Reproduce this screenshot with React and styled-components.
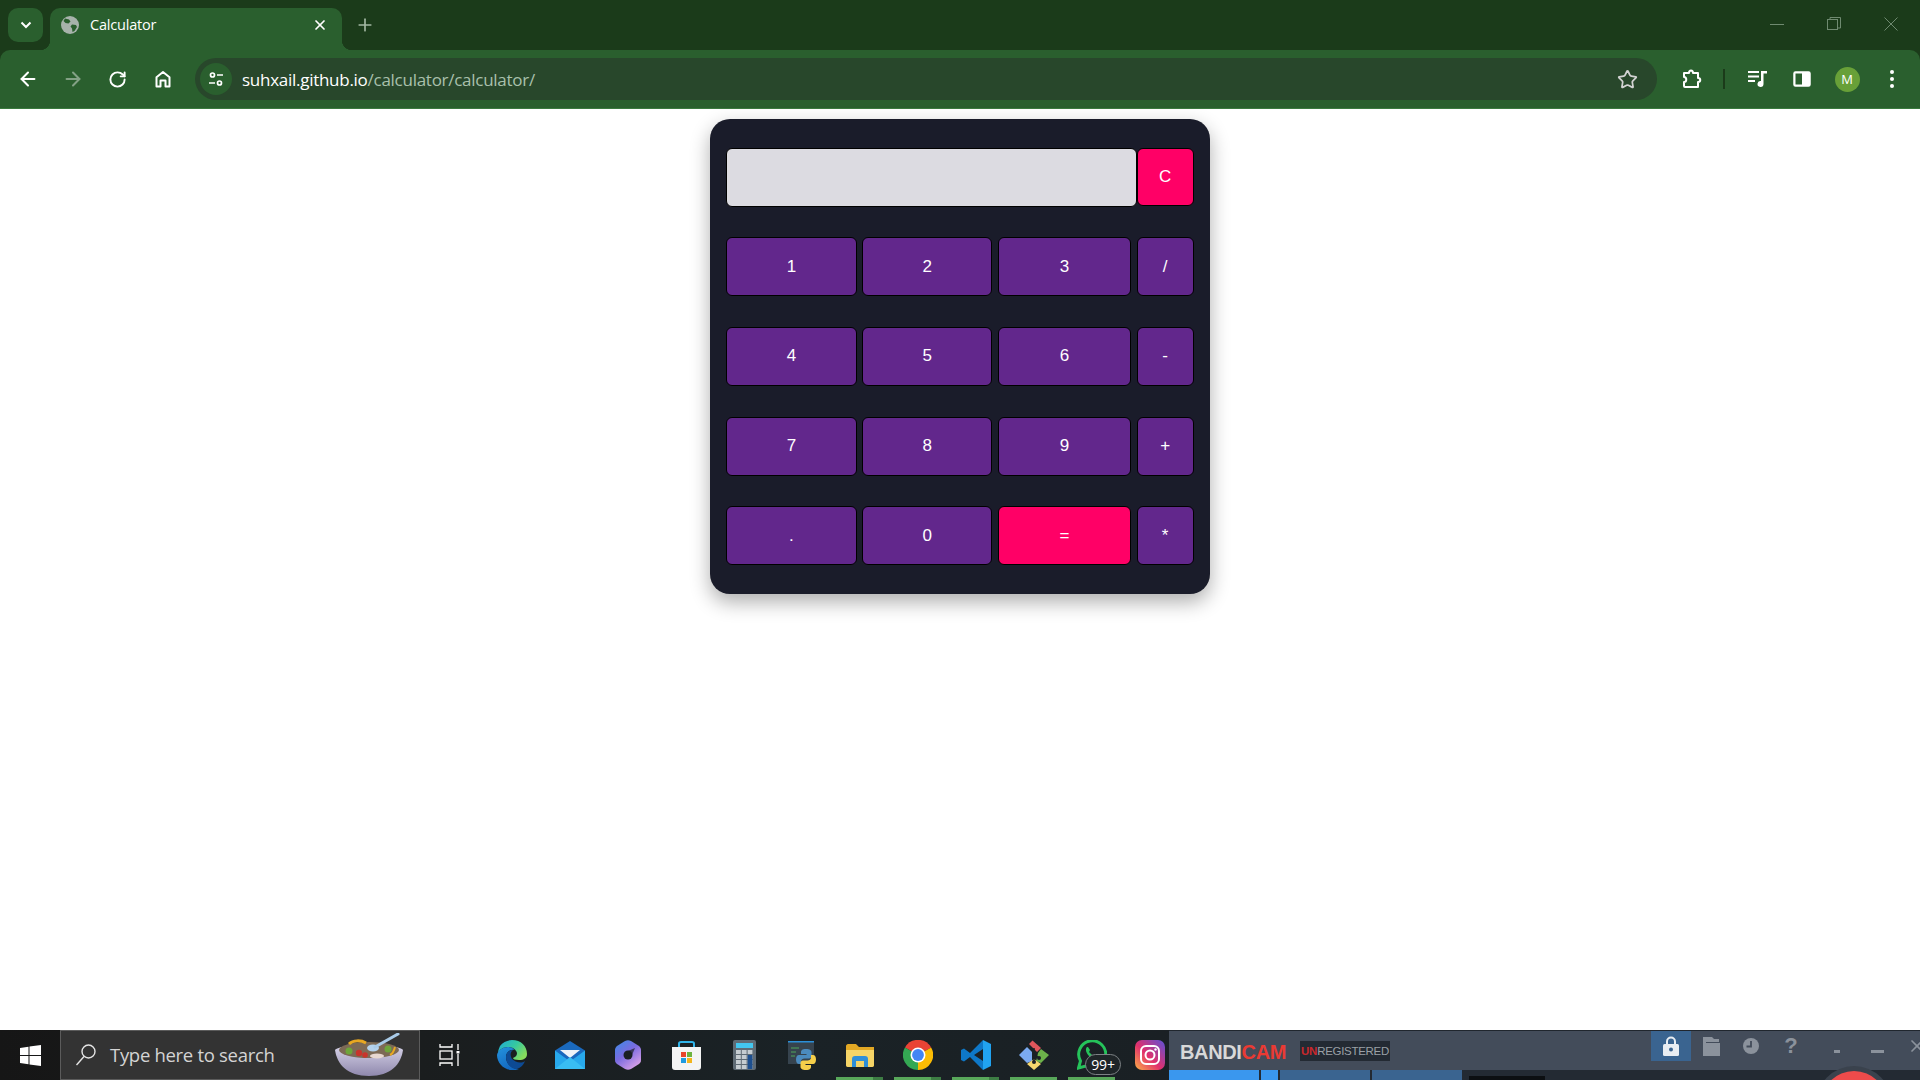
import React from "react";
import styled, { createGlobalStyle } from "styled-components";
import { ArrowLeft, ArrowRight, Plus, RotateCw, Star, X } from "lucide-react";

const GlobalStyle = createGlobalStyle`
  html, body {
    margin: 0;
    padding: 0;
    background: #fff;
  }
  * {
    box-sizing: border-box;
  }
`;

const Screen = styled.div`
  width: 1920px;
  height: 1080px;
  display: flex;
  flex-direction: column;
  overflow: hidden;
  background: #1b3b1a;
  font-family: "Open Sans", "Liberation Sans", sans-serif;
`;

/* browser chrome */
const TabStrip = styled.div`
  height: 50px;
  flex: none;
  display: flex;
  align-items: flex-end;
  background: #1b3b1a;
`;

const TabSearch = styled.div`
  width: 35px;
  height: 34px;
  margin: 0 7px 8px 8px;
  border-radius: 10px;
  background: #2a5f2e;
  display: flex;
  align-items: center;
  justify-content: center;
`;

const Tab = styled.div`
  position: relative;
  width: 292px;
  height: 42px;
  padding: 0 14px 8px 10px;
  display: flex;
  align-items: center;
  gap: 10px;
  border-radius: 10px 10px 0 0;
  background: #2a5f2e;
  color: #fff;
  z-index: 1;
  &::before,
  &::after {
    content: "";
    position: absolute;
    bottom: 0;
    width: 10px;
    height: 10px;
  }
  &::before {
    left: -10px;
    background: radial-gradient(circle at 0 0, transparent 10px, #2a5f2e 10.5px);
  }
  &::after {
    right: -10px;
    background: radial-gradient(circle at 100% 0, transparent 10px, #2a5f2e 10.5px);
  }
`;

const TabTitle = styled.span`
  flex: 1;
  font-size: 14.5px;
  letter-spacing: -0.2px;
  line-height: 1;
`;

const NewTab = styled.div`
  margin: 0 0 8px 10px;
  width: 26px;
  height: 34px;
  display: flex;
  align-items: center;
  justify-content: center;
  color: #a3b8a3;
`;

const WindowControls = styled.div`
  margin-left: auto;
  display: flex;
  align-self: flex-start;
  height: 50px;
  align-items: center;
  padding: 0 22px 2px 0;
  gap: 43px;
`;

const Toolbar = styled.div`
  height: 59px;
  flex: none;
  display: flex;
  align-items: center;
  padding: 0 0 0 10px;
  background: #2a5f2e;
  border-bottom: 1px solid #3a7a3e;
  border-radius: 10px 10px 0 0;
`;

const NavButton = styled.div`
  width: 35px;
  height: 34px;
  margin-right: 10px;
  display: flex;
  align-items: center;
  justify-content: center;
  color: ${(p) => (p.$dim ? "#83a185" : "#fff")};
`;

const Omnibox = styled.div`
  width: 1462px;
  height: 42px;
  margin-left: 5px;
  padding: 0 19px 0 5px;
  display: flex;
  align-items: center;
  flex: none;
  border-radius: 21px;
  background: #28472b;
`;

const SiteChip = styled.div`
  width: 32px;
  height: 32px;
  border-radius: 50%;
  background: #2a5f2e;
  display: flex;
  align-items: center;
  justify-content: center;
  margin-right: 10px;
`;

const Url = styled.div`
  flex: 1;
  font-size: 17px;
  letter-spacing: -0.27px;
  color: #fff;
`;

const UrlPath = styled.span`
  color: #a9c0ab;
`;

const ToolSlot = styled.div`
  width: ${(p) => p.$w}px;
  height: 34px;
  margin-left: ${(p) => p.$ml}px;
  flex: none;
  display: flex;
  align-items: center;
  justify-content: center;
`;

const Divider = styled.div`
  width: 2px;
  height: 20px;
  flex: none;
  background: #1b3b1a;
  margin-left: 13.5px;
`;

const Avatar = styled.div`
  width: 25px;
  height: 25px;
  border-radius: 50%;
  background: #68a038;
  color: #fff;
  font-size: 13px;
  display: flex;
  align-items: center;
  justify-content: center;
`;

/* calculator */
const Page = styled.main`
  flex: 1;
  background: #fff;
  padding-top: 10px;
`;

const Calc = styled.div`
  width: 500px;
  height: 475px;
  margin: 0 auto;
  padding: 28.5px 16px 0 16.2px;
  display: flex;
  flex-direction: column;
  gap: 30.7px;
  border-radius: 20px;
  background: #1a1c2a;
  box-shadow: 0 8px 20px rgba(0, 0, 0, 0.32);
`;

const TopRow = styled.div`
  display: flex;
  align-items: center;
  height: 59px;
`;

const Display = styled.div`
  width: 410.5px;
  height: 59px;
  border: 1px solid #000;
  border-radius: 6px;
  background: #dcdbe1;
`;

const KeyRow = styled.div`
  display: grid;
  grid-template-columns: 130.5px 130px 133px 57px;
  column-gap: 5.67px;
  height: 59px;
`;

const Key = styled.button`
  height: ${(p) => p.$h || 59}px;
  padding: 0;
  width: ${(p) => (p.$w ? `${p.$w}px` : "auto")};
  border: 1px solid #000;
  border-radius: 6px;
  background: ${(p) => (p.$accent ? "#ff0066" : "#62278c")};
  color: #fff;
  font-family: "Liberation Sans", Arial, sans-serif;
  font-size: 17px;
`;

/* taskbar */
const Taskbar = styled.footer`
  position: relative;
  height: 50px;
  flex: none;
  display: flex;
  background: linear-gradient(90deg, #161616 0, #1a1d1e 420px, #1a2226 800px, #1a2024 1170px);
`;

const StartButton = styled.div`
  width: 60px;
  display: flex;
  align-items: center;
  justify-content: center;
`;

const SearchBox = styled.div`
  width: 360px;
  display: flex;
  align-items: center;
  padding: 0 16px 0 14px;
  background: #333;
  border: 1px solid #5b5b5b;
  color: #d4d4d4;
  font-size: 18.5px;
`;

const SearchText = styled.span`
  flex: 1;
  margin-left: 13px;
  letter-spacing: -0.3px;
  padding-bottom: 2px;
`;

const TaskIcons = styled.div`
  width: 749px;
  flex: none;
  display: flex;
`;

const TaskIcon = styled.div`
  position: relative;
  width: ${(p) => p.$w || 58}px;
  flex: none;
  display: flex;
  align-items: center;
  justify-content: ${(p) => (p.$w ? "flex-start" : "center")};
  padding-left: ${(p) => (p.$w ? 19 : 0)}px;
  &::after {
    content: "";
    display: ${(p) => (p.$running ? "block" : "none")};
    position: absolute;
    left: 5px;
    right: 6px;
    bottom: 0;
    height: 3px;
    background: ${(p) =>
      p.$split
        ? "linear-gradient(90deg, #58a85a 0 37px, #3d7d44 37px)"
        : "#58a85a"};
  }
`;

const Badge = styled.span`
  position: absolute;
  left: 22px;
  bottom: 5px;
  width: 36px;
  height: 21px;
  border: 1px solid #7d8285;
  border-radius: 11px;
  background: #1f2528;
  color: #fff;
  font-size: 14px;
  display: flex;
  align-items: center;
  justify-content: center;
  letter-spacing: -0.2px;
`;

const Bandicam = styled.div`
  position: relative;
  flex: 1;
  display: flex;
  flex-direction: column;
  background: #232a33;
  overflow: hidden;
  border-top: 1px solid #20262e;
`;

const BandiTop = styled.div`
  height: 39px;
  display: flex;
  background: #434c5a;
`;

const BandiLogo = styled.div`
  width: 120px;
  margin-left: 11px;
  padding-top: 11px;
  font-family: "Liberation Sans", Arial, sans-serif;
  font-weight: 700;
  font-size: 20px;
  line-height: 1;
  letter-spacing: -0.35px;
  color: #d8d8d8;
`;

const BandiRed = styled.span`
  color: #ea3a33;
`;

const Unreg = styled.div`
  width: 90px;
  height: 20px;
  margin: 10px 0 0 0;
  background: #232a33;
  color: #9aa0a6;
  font-family: "Liberation Sans", Arial, sans-serif;
  font-size: 11.5px;
  letter-spacing: -0.3px;
  display: flex;
  align-items: center;
  justify-content: center;
`;

const UnregRed = styled.span`
  color: #c8282c;
  font-weight: 700;
`;

const BandiTools = styled.div`
  margin: 0 -17px 0 auto;
  flex: none;
  display: flex;
  height: 30px;
`;

const BandiTool = styled.div`
  width: 40px;
  margin-left: ${(p) => p.$ml || 0}px;
  flex: none;
  display: flex;
  align-items: center;
  justify-content: center;
  background: ${(p) => (p.$active ? "#3a6490" : "transparent")};
`;

const BandiDash = styled.span`
  width: ${(p) => p.$w}px;
  height: 3px;
  margin-top: 10px;
  background: #8b929c;
`;

const BandiGlyph = styled.span`
  color: #8b929c;
  font-family: "Liberation Sans", Arial, sans-serif;
  font-weight: 700;
  font-size: 22px;
`;

const BandiTabs = styled.div`
  flex: 1;
  display: flex;
  gap: 2px;
`;

const BandiTab = styled.div`
  width: ${(p) => p.$w}px;
  background: ${(p) => p.$c};
`;

const BlackSlot = styled.div`
  position: absolute;
  left: 300px;
  bottom: 0;
  width: 76px;
  height: 4px;
  background: #0c0f12;
`;

const RecordDot = styled.div`
  position: absolute;
  left: 652px;
  top: 40px;
  width: 66px;
  height: 66px;
  border-radius: 50%;
  background: #ee4b4b;
  box-shadow: 0 0 0 5px #3a424d;
`;

const ChromeTabIcon = () => (
  <svg width="20" height="20" viewBox="0 0 20 20">
    <circle cx="10" cy="10" r="9" fill="#a7b3ab" />
    <path
      d="M5 3.500l4 1 1.500 2-2 2-3-.5-2-2zM12 9.500l4 .5 1 2-2.500 4-2 1-.5-3.500-1.500-2z"
      fill="#2a5f2e"
    />
  </svg>
);

const HomeIcon = () => (
  <svg width="20" height="20" viewBox="0 0 20 20" fill="none" stroke="#fff" strokeWidth="2">
    <path d="M3.500 17.500V8.200L10 3l6.500 5.200v9.300h-4v-6h-5v6z" strokeLinejoin="round" />
  </svg>
);

const TuneIcon = () => (
  <svg width="16" height="16" viewBox="0 0 16 16" fill="none" stroke="#fff" strokeWidth="1.700">
    <circle cx="4.500" cy="4" r="2" />
    <path d="M9 4h6M1 12h6" />
    <circle cx="11.500" cy="12" r="2" />
  </svg>
);

const PuzzleIcon = () => (
  <svg width="22" height="22" viewBox="0 0 22 22" fill="none" stroke="#fff" strokeWidth="2" strokeLinejoin="round">
    <path d="M3 5h5c0-3.500 4-3.500 4 0h5v5c3 0 3 4 0 4v5H4c-1 0-1-1-1-1v-4c3 0 3-5 0-5z" />
  </svg>
);

const MediaIcon = () => (
  <svg width="20" height="18" viewBox="0 0 20 18" fill="#fff">
    <path d="M0 1h11v2H0zM0 5.500h11v2H0zM0 10h7v2H0z" />
    <path d="M13 1h6v2.500h-3.500V14a3 3 0 1 1-2.500-3z" />
  </svg>
);

const PanelIcon = () => (
  <svg width="18" height="16" viewBox="0 0 18 16">
    <rect x="1" y="1" width="16" height="14" rx="1.500" fill="#fff" stroke="#fff" strokeWidth="1.500" />
    <rect x="2.500" y="2.500" width="6.500" height="11" fill="#2a5f2e" />
  </svg>
);

const DotsIcon = () => (
  <svg width="4" height="18" viewBox="0 0 4 18" fill="#fff">
    <circle cx="2" cy="2" r="2" />
    <circle cx="2" cy="9" r="2" />
    <circle cx="2" cy="16" r="2" />
  </svg>
);

const WinMin = () => (
  <svg width="14" height="14" viewBox="0 0 14 14" stroke="#6f8a70" fill="none">
    <path d="M0 7.500h14" />
  </svg>
);

const WinRestore = () => (
  <svg width="14" height="14" viewBox="0 0 14 14" stroke="#6f8a70" fill="none">
    <rect x="0.500" y="2.500" width="10" height="10" />
    <path d="M3 2.500V.5h10.500v10.500H11" />
  </svg>
);

const WinClose = () => (
  <svg width="14" height="14" viewBox="0 0 14 14" stroke="#6f8a70" fill="none">
    <path d="M.5.5l13 13M13.500.5l-13 13" />
  </svg>
);

const WindowsLogo = () => (
  <svg width="21" height="21" viewBox="0 0 21 21" fill="#fff">
    <path d="M0 3l8.500-1.200v8.200H0zM9.500 1.600L21 0v10H9.500zM0 11h8.500v8.200L0 18zM9.500 11H21v10L9.500 19.400z" />
  </svg>
);

const SearchGlass = () => (
  <svg width="22" height="24" viewBox="0 0 22 24" fill="none" stroke="#e4e4e4" strokeWidth="1.400">
    <circle cx="13.500" cy="8.500" r="6.500" />
    <path d="M9 13.500L1.500 22" />
  </svg>
);

const SoupBowl = () => (
  <svg width="68" height="44" viewBox="0 0 68 44">
    <defs>
      <linearGradient id="bowlA" x1="0" y1="0" x2="0" y2="1">
        <stop offset="0" stopColor="#d9d5ea" />
        <stop offset="1" stopColor="#8f88ad" />
      </linearGradient>
    </defs>
    <path d="M0 17c6-7 62-7 68 0-2 14-12 26-34 26S2 31 0 17z" fill="url(#bowlA)" />
    <ellipse cx="34" cy="17" rx="30" ry="8" fill="#7d6a55" />
    <circle cx="14" cy="18" r="3.500" fill="#6ea63a" />
    <circle cx="53" cy="16" r="3.500" fill="#6ea63a" />
    <path d="M14 11c4-4 12-4 17-1" fill="none" stroke="#e8a822" strokeWidth="3" />
    <circle cx="24" cy="20" r="3.200" fill="#c8342c" />
    <circle cx="30" cy="22" r="2.800" fill="#c8342c" />
    <ellipse cx="42" cy="23" rx="7" ry="2.500" fill="#e8d8d0" />
    <path d="M60 14c-1 4-3 7-5 8" fill="none" stroke="#e8a822" strokeWidth="2" />
    <ellipse cx="38" cy="15" rx="6" ry="3.500" fill="#b4d2ec" />
    <path d="M40 14L63 1" stroke="#a9cbe8" strokeWidth="3" strokeLinecap="round" />
  </svg>
);

const TaskViewIcon = () => (
  <svg width="22" height="24" viewBox="0 0 22 24" fill="none" stroke="#fff" strokeWidth="1.300">
    <path d="M1 1v3h12V1M1 23v-3h12v3" />
    <rect x="1" y="8" width="12" height="8" />
    <path d="M19 1v6M19 11v12" />
    <rect x="17.500" y="8" width="3" height="2.500" fill="#fff" stroke="none" />
  </svg>
);

const EdgeIcon = () => (
  <svg width="30" height="30" viewBox="0 0 30 30">
    <defs>
      <linearGradient id="edgeA" x1="0" y1="0" x2="1" y2="0.600">
        <stop offset="0" stopColor="#1fa8d8" />
        <stop offset="0.55" stopColor="#35c8a0" />
        <stop offset="1" stopColor="#86dc5c" />
      </linearGradient>
      <linearGradient id="edgeB" x1="0" y1="0" x2="0.500" y2="1">
        <stop offset="0" stopColor="#2493de" />
        <stop offset="1" stopColor="#1368c0" />
      </linearGradient>
    </defs>
    <path d="M3 6C6 2 11 0 15 0c9 0 15 6 15 14 0 4-3 6-8 6-4 0-6-1-6-2 3-1 4-3 4-5-1-4-5-6-9-6S3 9 1 13c0-2 1-5 2-7z" fill="url(#edgeA)" />
    <path d="M0 15C1 10 6 7 11 7c3 0 5 1 7 3-5-1-9 2-9 7 0 7 6 12 13 12-2 1-5 1-7 1C7 30 0 23 0 15z" fill="url(#edgeB)" />
    <path d="M9 17c0-4 3-7 7-7-3 2-3 6-1 9 3 3 9 5 13 2-2 5-5 7-8 8-6 0-11-5-11-12z" fill="#0d4a94" />
  </svg>
);

const MailIcon = () => (
  <svg width="30" height="28" viewBox="0 0 30 28">
    <path d="M15 0l15 9.500V28H0V9.500z" fill="#1a69bd" />
    <path d="M5 9h20l-10 8z" fill="#eef4f8" />
    <path d="M0 9.500l15 11 15-11V28H0z" fill="#28a9ec" />
    <path d="M0 28l15-12 15 12z" fill="#39bdf2" />
  </svg>
);

const CopilotIcon = () => (
  <svg width="26" height="30" viewBox="0 0 26 30">
    <defs>
      <linearGradient id="copA" x1="0" y1="0" x2="0.700" y2="1">
        <stop offset="0" stopColor="#3a8ce8" />
        <stop offset="0.500" stopColor="#7a6be0" />
        <stop offset="1" stopColor="#d8a0e8" />
      </linearGradient>
    </defs>
    <path d="M10 1c2-1 4-1 6 0l8 5c1 1 2 2 2 4v10c0 2-1 3-2 4l-8 5c-2 1-4 1-6 0l-8-5c-1-1-2-2-2-4V10c0-2 1-3 2-4z" fill="url(#copA)" />
    <circle cx="13" cy="15" r="4.500" fill="#1a2024" />
    <path d="M13 11l7-3-3 7z" fill="#1a2024" opacity="0.700" />
  </svg>
);

const StoreIcon = () => (
  <svg width="29" height="29" viewBox="0 0 29 29">
    <path d="M7 6V2.500C7 1.500 8 1 9 1h11c1 0 2 .5 2 1.500V6" fill="none" stroke="#2fb4ea" strokeWidth="2" />
    <path d="M0 6h29v20c0 2-1 3-3 3H3c-2 0-3-1-3-3z" fill="#f4f4f4" />
    <rect x="9" y="11" width="5" height="5" fill="#e8452c" />
    <rect x="15" y="11" width="5" height="5" fill="#6db33f" />
    <rect x="9" y="17" width="5" height="5" fill="#1f9ae0" />
    <rect x="15" y="17" width="5" height="5" fill="#f3b51c" />
  </svg>
);

const CalcIcon = () => (
  <svg width="23" height="30" viewBox="0 0 23 30">
    <rect width="23" height="30" rx="2" fill="#5f6b75" />
    <rect x="3" y="3" width="17" height="5" fill="#43c6ef" />
    {[10, 15, 20, 25].map((y) =>
      [3, 8.8, 14.6].map((x) => (
        <rect key={`${x}-${y}`} x={x} y={y} width="4.800" height="4" fill="#c5ccd1" />
      ))
    )}
    <rect x="14.600" y="15" width="4.800" height="14" fill="#1d4f8f" />
  </svg>
);

const PythonIcon = () => (
  <svg width="28" height="29" viewBox="0 0 28 29">
    <rect width="26" height="23" fill="#36434e" />
    <rect width="26" height="1.500" fill="#2b8fd8" />
    <path d="M3 7h8M3 11h5M3 15h4" stroke="#4fa85a" strokeWidth="1" />
    <path
      d="M18 8c-4 0-5 1.500-5 3v2h5.500v1H11c-2 0-3 2-3 4.500S9 23 11 23h2v-2.500c0-2 1.500-3 3.500-3H21c1.500 0 2.500-1 2.500-2.500v-4c0-1.500-1.500-3-5.500-3z"
      fill="#4b8bbe"
    />
    <path
      transform="rotate(180 18 18.500)"
      d="M18 8c-4 0-5 1.500-5 3v2h5.500v1H11c-2 0-3 2-3 4.500S9 23 11 23h2v-2.500c0-2 1.500-3 3.500-3H21c1.500 0 2.500-1 2.500-2.500v-4c0-1.500-1.500-3-5.500-3z"
      fill="#f5cf4a"
    />
  </svg>
);

const FolderIcon = () => (
  <svg width="28" height="23" viewBox="0 0 28 23">
    <path d="M0 2c0-1 1-2 2-2h8l3 3h15v18c0 1-1 2-2 2H2c-1 0-2-1-2-2z" fill="#e2a824" />
    <path d="M0 6h28v15c0 1-1 2-2 2H2c-1 0-2-1-2-2z" fill="#f6d567" />
    <path d="M6 23v-8c0-2 1-3 3-3h10c2 0 3 1 3 3v8h-4v-6h-8v6z" fill="#2f8fd8" />
  </svg>
);

const ChromeIcon = () => (
  <svg width="30" height="30" viewBox="0 0 32 32">
    <path d="M16 16L2.100 8A16 16 0 0 1 30 8z" fill="#ea4335" />
    <path d="M16 16L30 8a16 16 0 0 1-14 24z" fill="#fbbc04" />
    <path d="M16 16v16A16 16 0 0 1 2.100 8z" fill="#34a853" />
    <circle cx="16" cy="16" r="8" fill="#fff" />
    <circle cx="16" cy="16" r="6.300" fill="#4285f4" />
  </svg>
);

const VsCodeIcon = () => (
  <svg width="30" height="30" viewBox="0 0 30 30">
    <path d="M22 0L9 13 3 8.500 0 10v10l3 1.500L9 17l13 13v-9l-9-6 9-6z" fill="#0e78c8" />
    <path d="M22 0l8 4v22l-8 4z" fill="#21a3f1" />
  </svg>
);

const GitIcon = () => (
  <svg width="30" height="30" viewBox="0 0 30 30">
    <path d="M0 15l8-8 5 5v9l-5 2z" fill="#7baaf0" />
    <path d="M10 4l3.500-3.500L22 8l-4 4z" fill="#e0565b" />
    <path d="M19 13l3-4 8 6-8 8-5-2 1-3z" fill="#6cb24a" />
    <path d="M8 24l7-5 7 5-7 6z" fill="#f5d76e" />
    <path d="M15 8v14M15 14l5 4" stroke="#1a2024" strokeWidth="1.500" />
    <circle cx="15" cy="22" r="2" fill="#1a2024" />
    <circle cx="20" cy="18" r="2" fill="#1a2024" />
  </svg>
);

const WhatsAppIcon = () => (
  <svg width="30" height="30" viewBox="0 0 30 30" fill="none">
    <path d="M1.500 28l2-7a13.500 13.500 0 1 1 5 5z" stroke="#25c35a" strokeWidth="3" />
    <path d="M10 7c-2 2-1 6 2 9s7 4 8 2l-2-3-2 1-4-4 1-2-2-3z" fill="#25c35a" />
  </svg>
);

const InstagramIcon = () => (
  <svg width="30" height="30" viewBox="0 0 30 30">
    <defs>
      <linearGradient id="igA" x1="0" y1="1" x2="1" y2="0">
        <stop offset="0" stopColor="#fcb045" />
        <stop offset="0.450" stopColor="#e1306c" />
        <stop offset="1" stopColor="#5b51d8" />
      </linearGradient>
    </defs>
    <rect width="30" height="30" rx="7" fill="url(#igA)" />
    <rect x="6" y="6" width="18" height="18" rx="5" fill="none" stroke="#fff" strokeWidth="2" />
    <circle cx="15" cy="15" r="4.500" fill="none" stroke="#fff" strokeWidth="2" />
    <circle cx="20.500" cy="9.500" r="1.200" fill="#fff" />
  </svg>
);

const BandiLock = () => (
  <svg width="16" height="20" viewBox="0 0 16 20">
    <path d="M4 9V5.500a4 4 0 0 1 8 0V9" fill="none" stroke="#e8edf2" strokeWidth="2" />
    <rect y="8" width="16" height="12" rx="1.500" fill="#e8edf2" />
    <circle cx="8" cy="13.500" r="2" fill="#3a6490" />
  </svg>
);

const BandiFolder = () => (
  <svg width="17" height="20" viewBox="0 0 17 20" fill="#8b929c">
    <path d="M0 1h9l2 2h5v3H3v14H0z" />
    <path d="M3 7h14v13H3z" />
  </svg>
);

const BandiClock = () => (
  <svg width="16" height="16" viewBox="0 0 16 16">
    <circle cx="8" cy="8" r="8" fill="#8b929c" />
    <path d="M8 3v5.500H3.500" fill="none" stroke="#434c5a" strokeWidth="1.800" />
  </svg>
);

const keyRows = [
  ["1", "2", "3", "/"],
  ["4", "5", "6", "-"],
  ["7", "8", "9", "+"],
  [".", "0", "=", "*"],
];

const taskIcons = [
  { id: "edge", icon: <EdgeIcon /> },
  { id: "mail", icon: <MailIcon /> },
  { id: "copilot", icon: <CopilotIcon /> },
  { id: "store", icon: <StoreIcon /> },
  { id: "calc", icon: <CalcIcon /> },
  { id: "python", icon: <PythonIcon /> },
  { id: "files", icon: <FolderIcon />, running: true, split: true },
  { id: "chrome", icon: <ChromeIcon />, running: true, split: true },
  { id: "vscode", icon: <VsCodeIcon />, running: true, split: true },
  { id: "git", icon: <GitIcon />, running: true },
  { id: "whatsapp", icon: <WhatsAppIcon />, running: true, badge: "99+" },
  { id: "instagram", icon: <InstagramIcon /> },
];

export default function App() {
  return (
    <Screen>
      <GlobalStyle />
      <TabStrip>
        <TabSearch>
          <svg width="12" height="8" viewBox="0 0 12 8" fill="none" stroke="#fff" strokeWidth="2">
            <path d="M1.500 1.500L6 6l4.500-4.500" />
          </svg>
        </TabSearch>
        <Tab>
          <ChromeTabIcon />
          <TabTitle>Calculator</TabTitle>
          <X size={16} strokeWidth={2.6} color="#fff" />
        </Tab>
        <NewTab>
          <Plus size={20} strokeWidth={2} />
        </NewTab>
        <WindowControls>
          <WinMin />
          <WinRestore />
          <WinClose />
        </WindowControls>
      </TabStrip>
      <Toolbar>
        <NavButton>
          <ArrowLeft size={22} strokeWidth={2.2} />
        </NavButton>
        <NavButton $dim>
          <ArrowRight size={22} strokeWidth={2.2} />
        </NavButton>
        <NavButton>
          <RotateCw size={19} strokeWidth={2.4} />
        </NavButton>
        <NavButton>
          <HomeIcon />
        </NavButton>
        <Omnibox>
          <SiteChip>
            <TuneIcon />
          </SiteChip>
          <Url>
            suhxail.github.io<UrlPath>/calculator/calculator/</UrlPath>
          </Url>
          <Star size={21} strokeWidth={2} color="#d3d3d3" />
        </Omnibox>
        <ToolSlot $w={35} $ml={17.5}>
          <PuzzleIcon />
        </ToolSlot>
        <Divider />
        <ToolSlot $w={20} $ml={23}>
          <MediaIcon />
        </ToolSlot>
        <ToolSlot $w={35} $ml={16.5}>
          <PanelIcon />
        </ToolSlot>
        <ToolSlot $w={35} $ml={10}>
          <Avatar>M</Avatar>
        </ToolSlot>
        <ToolSlot $w={20} $ml={17.5}>
          <DotsIcon />
        </ToolSlot>
      </Toolbar>
      <Page>
        <Calc>
          <TopRow>
            <Display />
            <Key $accent $w={57} $h={58}>C</Key>
          </TopRow>
          {keyRows.map((row) => (
            <KeyRow key={row.join("")}>
              {row.map((k) => (
                <Key key={k} $accent={k === "="}>
                  {k}
                </Key>
              ))}
            </KeyRow>
          ))}
        </Calc>
      </Page>
      <Taskbar>
        <StartButton>
          <WindowsLogo />
        </StartButton>
        <SearchBox>
          <SearchGlass />
          <SearchText>Type here to search</SearchText>
          <SoupBowl />
        </SearchBox>
        <TaskIcons>
          <TaskIcon $w={63}>
            <TaskViewIcon />
          </TaskIcon>
          {taskIcons.map((t) => (
            <TaskIcon key={t.id} $running={t.running} $split={t.split}>
              {t.icon}
              {t.badge && <Badge>{t.badge}</Badge>}
            </TaskIcon>
          ))}
        </TaskIcons>
        <Bandicam>
          <BandiTop>
            <BandiLogo>
              BANDI<BandiRed>CAM</BandiRed>
            </BandiLogo>
            <Unreg>
              <UnregRed>UN</UnregRed>REGISTERED
            </Unreg>
            <BandiTools>
              <BandiTool $active>
                <BandiLock />
              </BandiTool>
              <BandiTool>
                <BandiFolder />
              </BandiTool>
              <BandiTool>
                <BandiClock />
              </BandiTool>
              <BandiTool>
                <BandiGlyph>?</BandiGlyph>
              </BandiTool>
              <BandiTool $ml={6}>
                <BandiDash $w={6} />
              </BandiTool>
              <BandiTool>
                <BandiDash $w={13} />
              </BandiTool>
              <BandiTool>
                <X size={20} color="#8b929c" />
              </BandiTool>
            </BandiTools>
          </BandiTop>
          <BandiTabs>
            <BandiTab $w={90} $c="#3a97ee" />
            <BandiTab $w={17} $c="#3a97ee" />
            <BandiTab $w={90} $c="#3a6490" />
            <BandiTab $w={90} $c="#3a6490" />
          </BandiTabs>
          <BlackSlot />
          <RecordDot />
        </Bandicam>
      </Taskbar>
    </Screen>
  );
}
